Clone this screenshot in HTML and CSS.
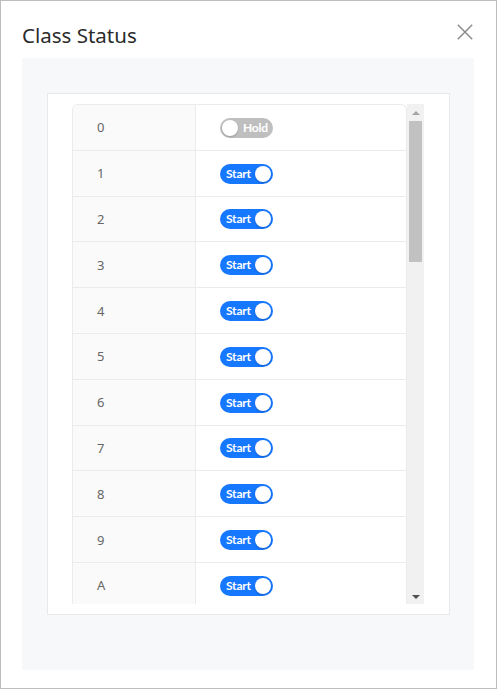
FILE: index.html
```html
<!DOCTYPE html>
<html lang="en">
<head>
<meta charset="utf-8">
<title>Class Status</title>
<link rel="stylesheet" href="styles.css">
</head>
<body>
<div class="window">
  <div class="header">
    <h1 class="title">Class Status</h1>
    <button class="close" aria-label="Close">
      <svg width="16" height="16" viewBox="0 0 16 16"><path d="M0.8 0.8 L15.2 15.2 M15.2 0.8 L0.8 15.2" stroke="#8c8c8c" stroke-width="1.5" fill="none"/></svg>
    </button>
  </div>
  <div class="panel">
    <div class="card">
      <div class="scroll">
        <div class="viewport">
          <div class="table">
            <div class="row"><div class="key">0</div><div class="val"><span class="toggle off"><span class="knob"></span><span class="label">Hold</span></span></div></div>
            <div class="row"><div class="key">1</div><div class="val"><span class="toggle on"><span class="label">Start</span><span class="knob"></span></span></div></div>
            <div class="row"><div class="key">2</div><div class="val"><span class="toggle on"><span class="label">Start</span><span class="knob"></span></span></div></div>
            <div class="row"><div class="key">3</div><div class="val"><span class="toggle on"><span class="label">Start</span><span class="knob"></span></span></div></div>
            <div class="row"><div class="key">4</div><div class="val"><span class="toggle on"><span class="label">Start</span><span class="knob"></span></span></div></div>
            <div class="row"><div class="key">5</div><div class="val"><span class="toggle on"><span class="label">Start</span><span class="knob"></span></span></div></div>
            <div class="row"><div class="key">6</div><div class="val"><span class="toggle on"><span class="label">Start</span><span class="knob"></span></span></div></div>
            <div class="row"><div class="key">7</div><div class="val"><span class="toggle on"><span class="label">Start</span><span class="knob"></span></span></div></div>
            <div class="row"><div class="key">8</div><div class="val"><span class="toggle on"><span class="label">Start</span><span class="knob"></span></span></div></div>
            <div class="row"><div class="key">9</div><div class="val"><span class="toggle on"><span class="label">Start</span><span class="knob"></span></span></div></div>
            <div class="row"><div class="key">A</div><div class="val"><span class="toggle on"><span class="label">Start</span><span class="knob"></span></span></div></div>
          </div>
        </div>
        <div class="scrollbar">
          <div class="sb-btn"><span class="arrow-up"></span></div>
          <div class="sb-track"><div class="sb-thumb"></div></div>
          <div class="sb-btn"><span class="arrow-down"></span></div>
        </div>
      </div>
    </div>
  </div>
</div>
</body>
</html>
```
FILE: styles.css
```css
* { box-sizing: border-box; }
html, body { margin: 0; padding: 0; background: #fff; }
body { font-family: "Noto Sans", "Liberation Sans", sans-serif; }

.window {
  width: 497px;
  height: 689px;
  border: 1px solid #bdbdbd;
  background: #fff;
  padding: 20px 22px 18px 21px;
  display: flex;
  flex-direction: column;
}

.header {
  display: flex;
  justify-content: space-between;
  align-items: flex-start;
  height: 28px;
  margin-bottom: 9px;
}
.title {
  margin: 0;
  font-size: 20.5px;
  line-height: 28px;
  font-weight: 400;
  color: #2b2b2b;
}
.close {
  border: 0;
  background: none;
  padding: 0;
  margin: 3px 1px 0 0;
  width: 16px;
  height: 16px;
  display: block;
}
.close svg { display: block; }

.panel {
  background: #f7f8fa;
  height: 612px;
  padding: 35px 24px 55px 25px;
}
.card {
  background: #fff;
  border: 1px solid #e9e9e9;
  padding: 10px 25px 10px 24px;
  height: 522px;
}
.scroll {
  height: 500px;
  width: 352px;
  display: flex;
}
.viewport {
  width: 335px;
  height: 500px;
  overflow: hidden;
  flex: none;
}
.scrollbar {
  width: 17px;
  flex: none;
  background: #f1f1f1;
  display: flex;
  flex-direction: column;
}
.sb-btn {
  height: 17px;
  display: flex;
  align-items: center;
  justify-content: center;
  flex: none;
}
.sb-track {
  flex: 1;
  padding: 0 2px;
}
.sb-thumb {
  height: 141px;
  background: #c1c1c1;
}
.arrow-up {
  width: 0; height: 0;
  border-left: 4px solid transparent;
  border-right: 4px solid transparent;
  border-bottom: 4px solid #a3a3a3;
  margin-top: 1px;
}
.arrow-down {
  width: 0; height: 0;
  border-left: 4px solid transparent;
  border-right: 4px solid transparent;
  border-top: 4px solid #505050;
  margin-top: 3px;
}

.table {
  width: 335px;
  border: 1px solid #ebebeb;
  border-bottom: 0;
  border-radius: 6px 6px 0 0;
  overflow: hidden;
}
.row {
  display: flex;
  height: 45.8px;
  border-bottom: 1px solid #ebebeb;
}
.key {
  width: 123px;
  flex: none;
  background: #fafafa;
  border-right: 1px solid #ebebeb;
  padding-left: 24px;
  display: flex;
  align-items: center;
  font-size: 13px;
  color: #666;
}
.val {
  flex: 1;
  padding-left: 24px;
  display: flex;
  align-items: center;
}

.toggle {
  width: 53px;
  height: 20px;
  border-radius: 10px;
  display: flex;
  align-items: center;
  padding: 0 2px;
  font-family: Lato, "Liberation Sans", sans-serif;
  font-weight: 700;
  font-size: 12px;
  letter-spacing: -0.2px;
  color: #fff;
  margin-top: 1px;
}
.toggle.on { background: #1677ff; justify-content: space-between; padding-left: 6px; }
.toggle.off { background: #bfbfbf; gap: 5px; }
.knob {
  width: 16px;
  height: 16px;
  border-radius: 50%;
  background: #fff;
  box-shadow: 0 1px 2px rgba(0, 0, 0, 0.2);
  flex: none;
}
.label { line-height: 20px; }
```
